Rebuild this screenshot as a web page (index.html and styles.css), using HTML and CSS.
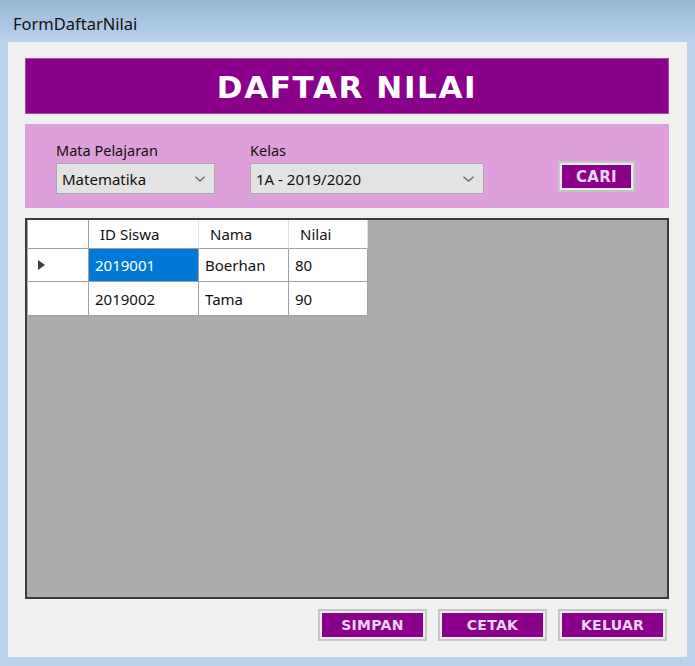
FILE: index.html
```html
<!DOCTYPE html>
<html>
<head>
<meta charset="utf-8">
<title>FormDaftarNilai</title>
<link rel="stylesheet" href="styles.css">
</head>
<body>
<div class="window">
  <div class="titlebar">FormDaftarNilai</div>
  <div class="client">
    <div class="banner">DAFTAR NILAI</div>
    <div class="filter">
      <div class="field field-mapel">
        <div class="label">Mata Pelajaran</div>
        <div class="combo combo-mapel">
          <span class="combo-text">Matematika</span>
          <svg class="chev" width="10" height="6" viewBox="0 0 10 6"><path d="M0.5 0.8 L5 5 L9.5 0.8" fill="none" stroke="#6a6a6a" stroke-width="1.4"/></svg>
        </div>
      </div>
      <div class="field field-kelas">
        <div class="label">Kelas</div>
        <div class="combo combo-kelas">
          <span class="combo-text">1A - 2019/2020</span>
          <svg class="chev" width="11" height="6" viewBox="0 0 11 6"><path d="M0.5 0.8 L5.5 5 L10.5 0.8" fill="none" stroke="#6a6a6a" stroke-width="1.4"/></svg>
        </div>
      </div>
      <div class="btn btn-cari"><span class="btn-face">CARI</span></div>
    </div>
    <div class="gridview">
      <div class="table">
        <div class="cell hdr rowhdr"></div>
        <div class="cell hdr">ID Siswa</div>
        <div class="cell hdr">Nama</div>
        <div class="cell hdr">Nilai</div>

        <div class="cell rowhdr"><span class="arrow"></span></div>
        <div class="cell selected">2019001</div>
        <div class="cell">Boerhan</div>
        <div class="cell">80</div>

        <div class="cell rowhdr"></div>
        <div class="cell">2019002</div>
        <div class="cell">Tama</div>
        <div class="cell">90</div>
      </div>
    </div>
    <div class="actions">
      <div class="btn btn-action"><span class="btn-face">SIMPAN</span></div>
      <div class="btn btn-action"><span class="btn-face">CETAK</span></div>
      <div class="btn btn-action"><span class="btn-face">KELUAR</span></div>
    </div>
  </div>
</div>
</body>
</html>
```

FILE: styles.css
```css
* { box-sizing: border-box; }

html, body {
  margin: 0;
  padding: 0;
}

body {
  width: 695px;
  height: 666px;
  overflow: hidden;
  font-family: "Noto Sans", "Open Sans", sans-serif;
}

.window {
  width: 695px;
  height: 666px;
  background: #bad3ec;
  display: flex;
  flex-direction: column;
}

.titlebar {
  height: 42px;
  flex: none;
  background: linear-gradient(to bottom, #99b6d5 0%, #a9c4e1 50%, #b9d1eb 100%);
  padding: 13px 0 0 13px;
  font-size: 16.5px;
  line-height: 22px;
  color: #111;
}

.client {
  margin: 0 8px;
  height: 615px;
  background: #f0f0f0;
  padding: 16px 18px 16px 17px;
  display: flex;
  flex-direction: column;
}

.banner {
  height: 56px;
  flex: none;
  background: #8b008b;
  border: 1px solid #a64ca6;
  color: #ffffff;
  font-family: "DejaVu Sans", "Noto Sans", sans-serif;
  font-weight: bold;
  font-size: 31px;
  letter-spacing: 1.6px;
  display: flex;
  align-items: center;
  justify-content: center;
  padding-top: 1px;
}

.filter {
  margin-top: 10px;
  height: 84px;
  flex: none;
  background: #dda0dd;
  padding: 16px 0 14px 31px;
  display: flex;
  align-items: flex-end;
}

.field {
  display: flex;
  flex-direction: column;
}

.field-kelas {
  margin-left: 35px;
}

.label {
  font-size: 14.5px;
  line-height: 20px;
  height: 20px;
  margin-bottom: 3px;
  color: #111;
}

.combo {
  height: 31px;
  background: #e3e3e3;
  border: 1px solid #a9a9a9;
  display: flex;
  align-items: center;
  justify-content: space-between;
  padding: 0 9px 0 5px;
  font-size: 15px;
  color: #111;
}

.combo-mapel { width: 159px; }
.combo-kelas { width: 234px; }

.chev { display: block; margin-top: 1px; }

.btn {
  border: 2px solid #c6c6c6;
  padding: 2px;
  background: #ededed;
  display: flex;
}

.btn-face {
  flex: 1;
  background: #8b008b;
  color: #ecd6f2;
  font-family: "DejaVu Sans", "Noto Sans", sans-serif;
  font-weight: bold;
  font-size: 14px;
  letter-spacing: 0.3px;
  display: flex;
  align-items: center;
  justify-content: center;
}

.btn-cari {
  width: 77px;
  height: 31px;
  margin-left: 74px;
  margin-bottom: 2px;
}

.btn-cari .btn-face {
  font-size: 15px;
}

.gridview {
  margin-top: 10px;
  height: 381px;
  flex: none;
  border: 2px solid #3b3b3b;
  background: #ababab;
}

.table {
  display: grid;
  grid-template-columns: 61px 110px 90px 79px;
  grid-template-rows: 29px 33px 34px;
  width: 340px;
  margin-left: 1px;
}

.cell {
  background: #ffffff;
  border-right: 1px solid #a0a0a0;
  border-bottom: 1px solid #a0a0a0;
  font-size: 15px;
  color: #111;
  display: flex;
  align-items: center;
  padding-left: 6px;
  white-space: nowrap;
}

.cell.hdr {
  padding-left: 11px;
  border-right-color: #e2e2e2;
  border-bottom-color: #a0a0a0;
}

.cell.hdr.rowhdr {
  border-right-color: #a0a0a0;
}

.cell.rowhdr {
  padding-left: 10px;
}

.cell.selected {
  background: #0078d7;
  color: #ffffff;
}

.arrow {
  width: 0;
  height: 0;
  border-top: 5px solid transparent;
  border-bottom: 5px solid transparent;
  border-left: 7px solid #3c3c3c;
}

.actions {
  margin-top: 10px;
  display: flex;
  justify-content: flex-end;
  gap: 11px;
  padding-right: 2px;
}

.btn-action {
  width: 109px;
  height: 32px;
}
```
